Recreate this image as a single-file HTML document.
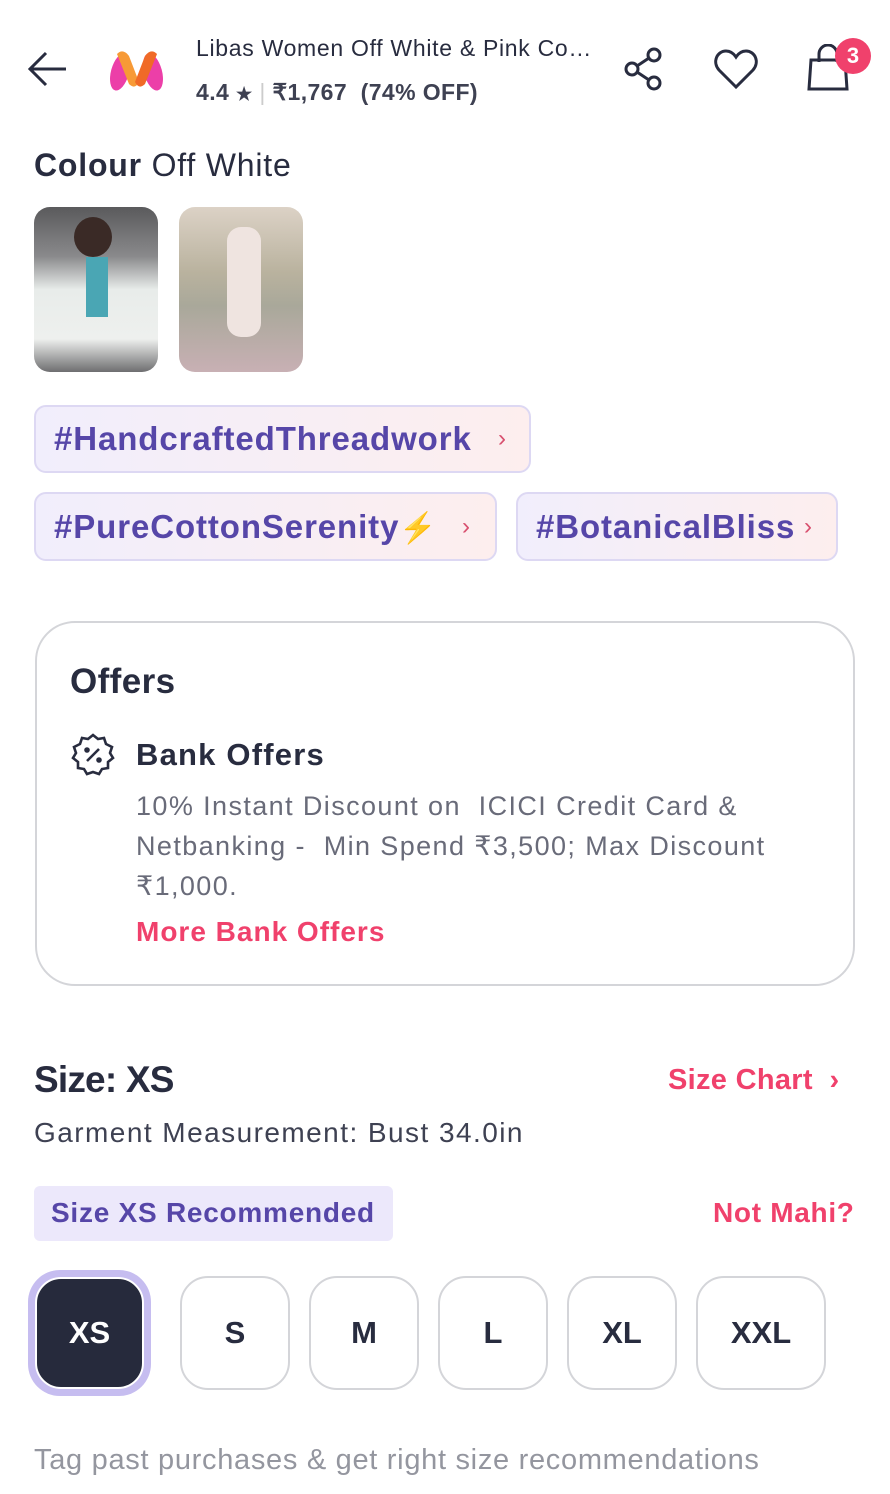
<!DOCTYPE html>
<html><head><meta charset="utf-8"><style>
body{margin:0;width:890px;height:1494px;background:#fff;position:relative;overflow:hidden;font-family:"Liberation Sans",sans-serif;color:#282c3f}
.a{position:absolute;white-space:nowrap}
.chip{position:absolute;border:2px solid #ddd8f3;border-radius:12px;background:linear-gradient(90deg,#f1eefc,#fdeeee);box-sizing:border-box}
.chip span{position:absolute;left:18px;top:50%;transform:translateY(-50%);font-weight:bold;font-size:33px;color:#5646a8;letter-spacing:0.9px}
.chip i{position:absolute;top:50%;transform:translateY(-50%);font-style:normal;color:#d8506f;font-size:24px}
.sz{position:absolute;top:1276px;height:114px;border:2px solid #d4d5d9;border-radius:28px;box-sizing:border-box;display:flex;align-items:center;justify-content:center;font-weight:bold;font-size:31px}
</style></head><body>
<svg class="a" style="left:26px;top:50px" width="42" height="40" viewBox="0 0 42 40"><path d="M40 19H4M20 3L4 19l16 16" fill="none" stroke="#282c3f" stroke-width="3"/></svg>
<svg class="a" style="left:105px;top:46px" width="64" height="46" viewBox="0 0 64 46"><ellipse cx="15" cy="26" rx="9" ry="19" fill="#ec3fa8" transform="rotate(15 15 26)"/><ellipse cx="48" cy="26" rx="9" ry="19" fill="#ec3fa8" transform="rotate(-15 48 26)"/><path d="M12 8 Q18 2 24 10 L34 36 Q30 44 24 38 Z" fill="#f79a36"/><path d="M52 8 Q46 2 40 10 L30 36 Q34 44 40 38 Z" fill="#f06a27"/></svg>
<div class="a" style="left:196px;top:35px;font-size:23px;letter-spacing:0.7px">Libas Women Off White &amp; Pink Co…</div>
<div class="a" style="left:196px;top:79px;font-size:23px;font-weight:bold;color:#3e4152;letter-spacing:0.4px">4.4 <span style="font-size:18px">★</span> <span style="color:#ccc;font-weight:normal">|</span> ₹1,767 &nbsp;(74% OFF)</div>
<svg class="a" style="left:622px;top:47px" width="44" height="44" viewBox="0 0 44 44" fill="none" stroke="#282c3f" stroke-width="3"><circle cx="32" cy="8" r="6"/><circle cx="10" cy="22" r="6"/><circle cx="32" cy="36" r="6"/><path d="M15 19l12-8M15 25l12 8"/></svg>
<svg class="a" style="left:713px;top:48px" width="46" height="42" viewBox="0 0 46 42"><path d="M23 39L6 22C-1 14 4 3 13 3c5 0 8 3 10 6 2-3 5-6 10-6 9 0 14 11 7 19z" fill="none" stroke="#282c3f" stroke-width="3"/></svg>
<svg class="a" style="left:806px;top:44px" width="46" height="48" viewBox="0 0 46 48" fill="none" stroke="#282c3f" stroke-width="3"><path d="M5 16h34l2 29H3z"/><path d="M13 18V10a9 9 0 0118 0v8"/></svg>
<div class="a" style="left:835px;top:38px;width:36px;height:36px;border-radius:50%;background:#f0416c;color:#fff;font-weight:bold;font-size:22px;text-align:center;line-height:36px">3</div>
<div class="a" style="left:34px;top:147px;font-size:32px;letter-spacing:0.8px"><b>Colour</b> Off White</div>
<div class="a" style="left:34px;top:207px;width:124px;height:165px;border-radius:16px;background:linear-gradient(180deg,#5a5a5c 0%,#8a8a8c 30%,#e8ecea 50%,#eef0ee 80%,#6e6e70 100%)"><div style="position:absolute;left:40px;top:10px;width:38px;height:40px;border-radius:50%;background:#3a2a26"></div><div style="position:absolute;left:52px;top:50px;width:22px;height:60px;background:#4aa6b4"></div></div>
<div class="a" style="left:179px;top:207px;width:124px;height:165px;border-radius:16px;background:linear-gradient(180deg,#dcd2c6 0%,#b9b29e 40%,#a9a89a 60%,#c8b0b4 100%)"><div style="position:absolute;left:48px;top:20px;width:34px;height:110px;background:#efe4e0;border-radius:14px"></div></div>
<div class="chip" style="left:34px;top:405px;width:497px;height:68px"><span>#HandcraftedThreadwork</span><i style="left:462px">›</i></div>
<div class="chip" style="left:34px;top:492px;width:463px;height:69px"><span>#PureCottonSerenity<span style="position:static;transform:none;color:#f5b90c;font-size:30px">⚡</span></span><i style="left:426px">›</i></div>
<div class="chip" style="left:516px;top:492px;width:322px;height:69px"><span>#BotanicalBliss</span><i style="left:286px">›</i></div>
<div class="a" style="left:35px;top:621px;width:820px;height:365px;border:2px solid #d4d5d9;border-radius:40px;box-sizing:border-box"></div>
<div class="a" style="left:70px;top:662px;font-size:35px;font-weight:bold;letter-spacing:0.4px">Offers</div>
<svg class="a" style="left:70px;top:732px" width="46" height="46" viewBox="0 0 46 46" fill="none" stroke="#282c3f" stroke-width="2.6"><path d="M23 3l5 4 6-1 2 6 6 3-2 6 3 5-5 4 0 6-6 1-3 5-6-2-6 2-3-5-6-1 0-6-5-4 3-5-2-6 6-3 2-6 6 1z"/><path d="M17 29l12-12"/><circle cx="17" cy="18" r="1.5" fill="#282c3f"/><circle cx="29" cy="28" r="1.5" fill="#282c3f"/></svg>
<div class="a" style="left:136px;top:737px;font-size:31px;font-weight:bold;letter-spacing:1.2px">Bank Offers</div>
<div class="a" style="left:136px;top:786px;font-size:27px;color:#696b79;line-height:40px;letter-spacing:1.4px">10% Instant Discount on &nbsp;ICICI Credit Card &amp;<br>Netbanking - &nbsp;Min Spend ₹3,500; Max Discount<br>₹1,000.</div>
<div class="a" style="left:136px;top:916px;font-size:28px;font-weight:bold;color:#f0416c;letter-spacing:1px">More Bank Offers</div>
<div class="a" style="left:34px;top:1059px;font-size:37px;font-weight:bold;letter-spacing:-0.8px">Size: XS</div>
<div class="a" style="left:668px;top:1064px;font-size:29px;font-weight:bold;color:#f0416c;letter-spacing:0.3px">Size Chart &nbsp;›</div>
<div class="a" style="left:34px;top:1117px;font-size:28px;color:#3e4152;letter-spacing:1.45px">Garment Measurement: Bust 34.0in</div>
<div class="a" style="left:34px;top:1186px;width:359px;height:55px;background:#ece8fb;border-radius:6px"></div>
<div class="a" style="left:51px;top:1197px;font-size:28px;font-weight:bold;color:#5646a8;letter-spacing:0.75px">Size XS Recommended</div>
<div class="a" style="left:713px;top:1197px;font-size:28px;font-weight:bold;color:#f0416c;letter-spacing:0.7px">Not Mahi?</div>
<div class="a" style="left:28px;top:1270px;width:123px;height:126px;border-radius:32px;background:#c6bdf0"></div>
<div class="sz" style="left:35px;top:1277px;width:109px;height:112px;background:#262a3c;border:2px solid #fff;color:#fff;border-radius:26px">XS</div>
<div class="sz" style="left:180px;width:110px">S</div>
<div class="sz" style="left:309px;width:110px">M</div>
<div class="sz" style="left:438px;width:110px">L</div>
<div class="sz" style="left:567px;width:110px">XL</div>
<div class="sz" style="left:696px;width:130px">XXL</div>
<div class="a" style="left:34px;top:1444px;font-size:29px;color:#94969f;letter-spacing:0.7px">Tag past purchases &amp; get right size recommendations</div>
</body></html>
